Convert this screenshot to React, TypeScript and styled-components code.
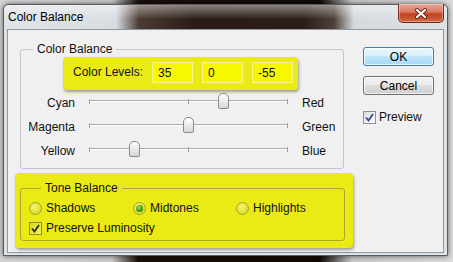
import { createGlobalStyle, styled } from 'styled-components'

const GlobalStyle = createGlobalStyle`
  html, body {
    margin: 0;
    padding: 0;
    background: #1a0f0a;
  }
  body {
    font-family: "Liberation Sans", Arial, sans-serif;
    font-size: 12px;
    color: #111;
  }
`

type SliderProps = {
  left: string
  right: string
  value: number
}

const sliders: SliderProps[] = [
  { left: 'Cyan', right: 'Red', value: 35 },
  { left: 'Magenta', right: 'Green', value: 0 },
  { left: 'Yellow', right: 'Blue', value: -55 },
]

const CloseIcon = () => (
  <svg width="14" height="11" viewBox="0 0 14 11">
    <path d="M3 2 L11 9 M11 2 L3 9" stroke="#6a2414" strokeWidth="4" strokeLinecap="round" />
    <path d="M3 2 L11 9 M11 2 L3 9" stroke="#fff" strokeWidth="2.2" strokeLinecap="round" />
  </svg>
)

const CheckMark = ({ color }: { color: string }) => (
  <svg width="9" height="9" viewBox="0 0 9 9">
    <path d="M1 4.5 L3.5 7.5 L8 1" stroke={color} strokeWidth="1.8" fill="none" />
  </svg>
)

const SliderRow = ({ left, right, value }: SliderProps) => {
  const percentage = 50 + value / 2

  return (
    <Row>
      <SideLabel $align="right">{left}</SideLabel>
      <Track>
        <Tick style={{ left: 0 }} />
        <Tick style={{ left: '50%' }} />
        <Tick style={{ left: '100%' }} />
        <Thumb style={{ left: `${percentage}%` }} />
      </Track>
      <SideLabel $align="left">{right}</SideLabel>
    </Row>
  )
}

export default function App() {
  return (
    <>
      <GlobalStyle />
      <Scene>
        <Window>
          <TitleBar>
            <Title>Color Balance</Title>
            <CloseButton>
              <CloseIcon />
            </CloseButton>
          </TitleBar>
          <Body>
            <LeftColumn>
              <Group>
                <Legend>Color Balance</Legend>
                <LevelsHighlight>
                  <LevelsLabel>Color Levels:</LevelsLabel>
                  <LevelInput>35</LevelInput>
                  <LevelInput>0</LevelInput>
                  <LevelInput>-55</LevelInput>
                </LevelsHighlight>
                {sliders.map((s) => (
                  <SliderRow key={s.left} {...s} />
                ))}
              </Group>
              <ToneHighlight>
                <Group $tinted>
                  <Legend>Tone Balance</Legend>
                  <RadioRow>
                    <Option>
                      <Radio />
                      Shadows
                    </Option>
                    <Option>
                      <Radio $checked />
                      Midtones
                    </Option>
                    <Option>
                      <Radio />
                      Highlights
                    </Option>
                  </RadioRow>
                  <CheckRow>
                    <Option>
                      <Check $tinted>
                        <CheckMark color="#2a2a00" />
                      </Check>
                      Preserve Luminosity
                    </Option>
                  </CheckRow>
                </Group>
              </ToneHighlight>
            </LeftColumn>
            <RightColumn>
              <Button $primary>OK</Button>
              <Button>Cancel</Button>
              <PreviewOption>
                <Check>
                  <CheckMark color="#2b4a9a" />
                </Check>
                Preview
              </PreviewOption>
            </RightColumn>
          </Body>
        </Window>
      </Scene>
    </>
  )
}

const Scene = styled.div`
  width: 453px;
  height: 262px;
  box-sizing: border-box;
  padding: 4px 0 0 3px;
  overflow: hidden;
  background: linear-gradient(
    90deg,
    #d4d4d4 0,
    #c9c9c9 112px,
    #1c100a 138px,
    #120905 320px,
    #c7c7c7 352px,
    #dadada 100%
  );
`

const Window = styled.div`
  width: 445px;
  height: 252px;
  box-sizing: border-box;
  border: 1px solid #5a5e63;
  border-radius: 6px 6px 0 0;
  padding: 0 3px 2px 3px;
  background: #dde2e7;
  box-shadow: 0 0 5px rgba(0, 0, 0, 0.6);
  display: flex;
  flex-direction: column;
`

const TitleBar = styled.div`
  height: 24px;
  margin: 0 -3px;
  padding: 0 3px 0 4px;
  display: flex;
  align-items: center;
  justify-content: space-between;
  border-radius: 5px 5px 0 0;
  background:
    linear-gradient(180deg, rgba(255, 255, 255, 0.45), rgba(255, 255, 255, 0) 60%),
    linear-gradient(
      90deg,
      #dfe4e9 0,
      #d8dde2 112px,
      #4a3b33 135px,
      #2a1c15 190px,
      #2b1e17 300px,
      #4d4039 330px,
      #d5dadf 350px,
      #dde2e7 100%
    );
`

const Title = styled.span`
  font-size: 12px;
  color: #000;
`

const CloseButton = styled.div`
  align-self: flex-start;
  margin-top: -1px;
  width: 46px;
  height: 19px;
  box-sizing: border-box;
  border: 1px solid #6e2a1c;
  border-top: none;
  border-radius: 0 0 5px 5px;
  display: flex;
  align-items: center;
  justify-content: center;
  background: linear-gradient(180deg, #e9a99b 0, #d87762 45%, #c1401f 55%, #cf6a45 100%);
  box-shadow: inset 0 0 0 1px rgba(255, 220, 210, 0.45);
`

const Body = styled.div`
  flex: 1;
  border: 1px solid #8d98a3;
  background: #f0f0f0;
  display: flex;
  align-items: flex-start;
`

const LeftColumn = styled.div`
  width: 338px;
  margin-left: 7px;
  display: flex;
  flex-direction: column;
`

const Group = styled.fieldset<{ $tinted?: boolean }>`
  margin: 12px 0 0 5px;
  padding: 0 0 5px 0;
  width: 324px;
  box-sizing: border-box;
  border: 1px solid ${({ $tinted }) => ($tinted ? '#a8a834' : '#c4c8cc')};
  border-radius: 3px;
  min-inline-size: 0;

  ${({ $tinted }) =>
    $tinted &&
    `
    margin: 0;
    width: 325px;
    padding: 3px 0 2px 8px;
  `}
`

const Legend = styled.legend`
  margin-left: 12px;
  padding: 0 4px;
  line-height: 14px;
  font-size: 12px;
`

const LevelsHighlight = styled.div`
  margin: 1px 0 1px 42px;
  width: 235px;
  height: 33px;
  box-sizing: border-box;
  padding: 5px 0 0 10px;
  display: flex;
  align-items: flex-start;
  gap: 9px;
  background: #eaea14;
  border-radius: 4px;
  box-shadow: 1px 2px 3px rgba(0, 0, 0, 0.35);
`

const LevelsLabel = styled.span`
  flex: 0 0 69px;
  white-space: nowrap;
  line-height: 21px;
`

const LevelInput = styled.div`
  flex: 0 0 41px;
  height: 21px;
  box-sizing: border-box;
  padding-left: 5px;
  line-height: 20px;
  background: #f7f700;
  border: 1px solid #f6f68a;
`

const Row = styled.div`
  height: 24px;
  display: grid;
  grid-template-columns: 54px 198px 1fr;
  column-gap: 14px;
  align-items: center;
`

const SideLabel = styled.span<{ $align: 'left' | 'right' }>`
  text-align: ${({ $align }) => $align};
  padding-left: ${({ $align }) => ($align === 'left' ? '1px' : '0')};
`

const Track = styled.div`
  position: relative;
  height: 2px;
  margin-top: -4px;
  border-top: 1px solid #a9a9a9;
  border-bottom: 1px solid #ffffff;
  box-sizing: border-box;
`

const Tick = styled.span`
  position: absolute;
  top: -2px;
  width: 1px;
  height: 5px;
  background: #a0a0a0;
`

const Thumb = styled.span`
  position: absolute;
  top: -8px;
  width: 11px;
  height: 16px;
  margin-left: -5px;
  box-sizing: border-box;
  border: 1px solid #8a8a8a;
  border-radius: 5px 5px 2px 2px;
  background: linear-gradient(180deg, #ffffff 0, #ececec 50%, #d6d6d6 100%);
`

const ToneHighlight = styled.div`
  margin-top: 4px;
  box-sizing: border-box;
  height: 75px;
  padding: 8px 0 0 5px;
  background: #eaea14;
  border-radius: 4px;
  box-shadow: 1px 2px 3px rgba(0, 0, 0, 0.35);
`

const RadioRow = styled.div`
  height: 20px;
  display: grid;
  grid-template-columns: 104px 103px 1fr;
  align-items: center;
`

const CheckRow = styled.div`
  height: 20px;
  display: flex;
  align-items: center;
`

const Option = styled.label`
  display: flex;
  align-items: center;
  gap: 4px;
`

const Radio = styled.span<{ $checked?: boolean }>`
  width: 13px;
  height: 13px;
  box-sizing: border-box;
  border-radius: 50%;
  border: 1px solid #a3a33a;
  display: flex;
  align-items: center;
  justify-content: center;
  background: radial-gradient(circle at 40% 35%, #f6f670 0, #dcdc2a 70%, #c8c81a 100%);

  &::after {
    content: '';
    display: ${({ $checked }) => ($checked ? 'block' : 'none')};
    width: 7px;
    height: 7px;
    border-radius: 50%;
    background: radial-gradient(circle at 40% 35%, #9ee05a 0, #3f9a10 55%, #1f5a00 100%);
  }
`

const Check = styled.span<{ $tinted?: boolean }>`
  width: 13px;
  height: 13px;
  box-sizing: border-box;
  border: 1px solid ${({ $tinted }) => ($tinted ? '#8c8c2c' : '#8e8f8f')};
  display: flex;
  align-items: center;
  justify-content: center;
  background: ${({ $tinted }) =>
    $tinted
      ? 'linear-gradient(135deg, #d6d620 0, #f4f45a 100%)'
      : 'linear-gradient(135deg, #dcdcdc 0, #ffffff 100%)'};
`

const RightColumn = styled.div`
  margin: 17px 0 0 10px;
  width: 71px;
  display: flex;
  flex-direction: column;
  gap: 10px;
`

const Button = styled.div<{ $primary?: boolean }>`
  height: 19px;
  box-sizing: border-box;
  border: 1px solid ${({ $primary }) => ($primary ? '#3c7fb1' : '#707070')};
  border-radius: 3px;
  display: flex;
  align-items: center;
  justify-content: center;
  font-size: 12px;
  color: #000;
  background: ${({ $primary }) =>
    $primary
      ? 'linear-gradient(180deg, #eaf6fd 0, #d9f0fc 45%, #bee6fd 50%, #a7d9f5 100%)'
      : 'linear-gradient(180deg, #f2f2f2 0, #ebebeb 45%, #dddddd 50%, #cfcfcf 100%)'};
  box-shadow: inset 0 0 0 1px rgba(255, 255, 255, 0.7);
`

const PreviewOption = styled.label`
  margin-top: 5px;
  display: flex;
  align-items: center;
  gap: 3px;
`
